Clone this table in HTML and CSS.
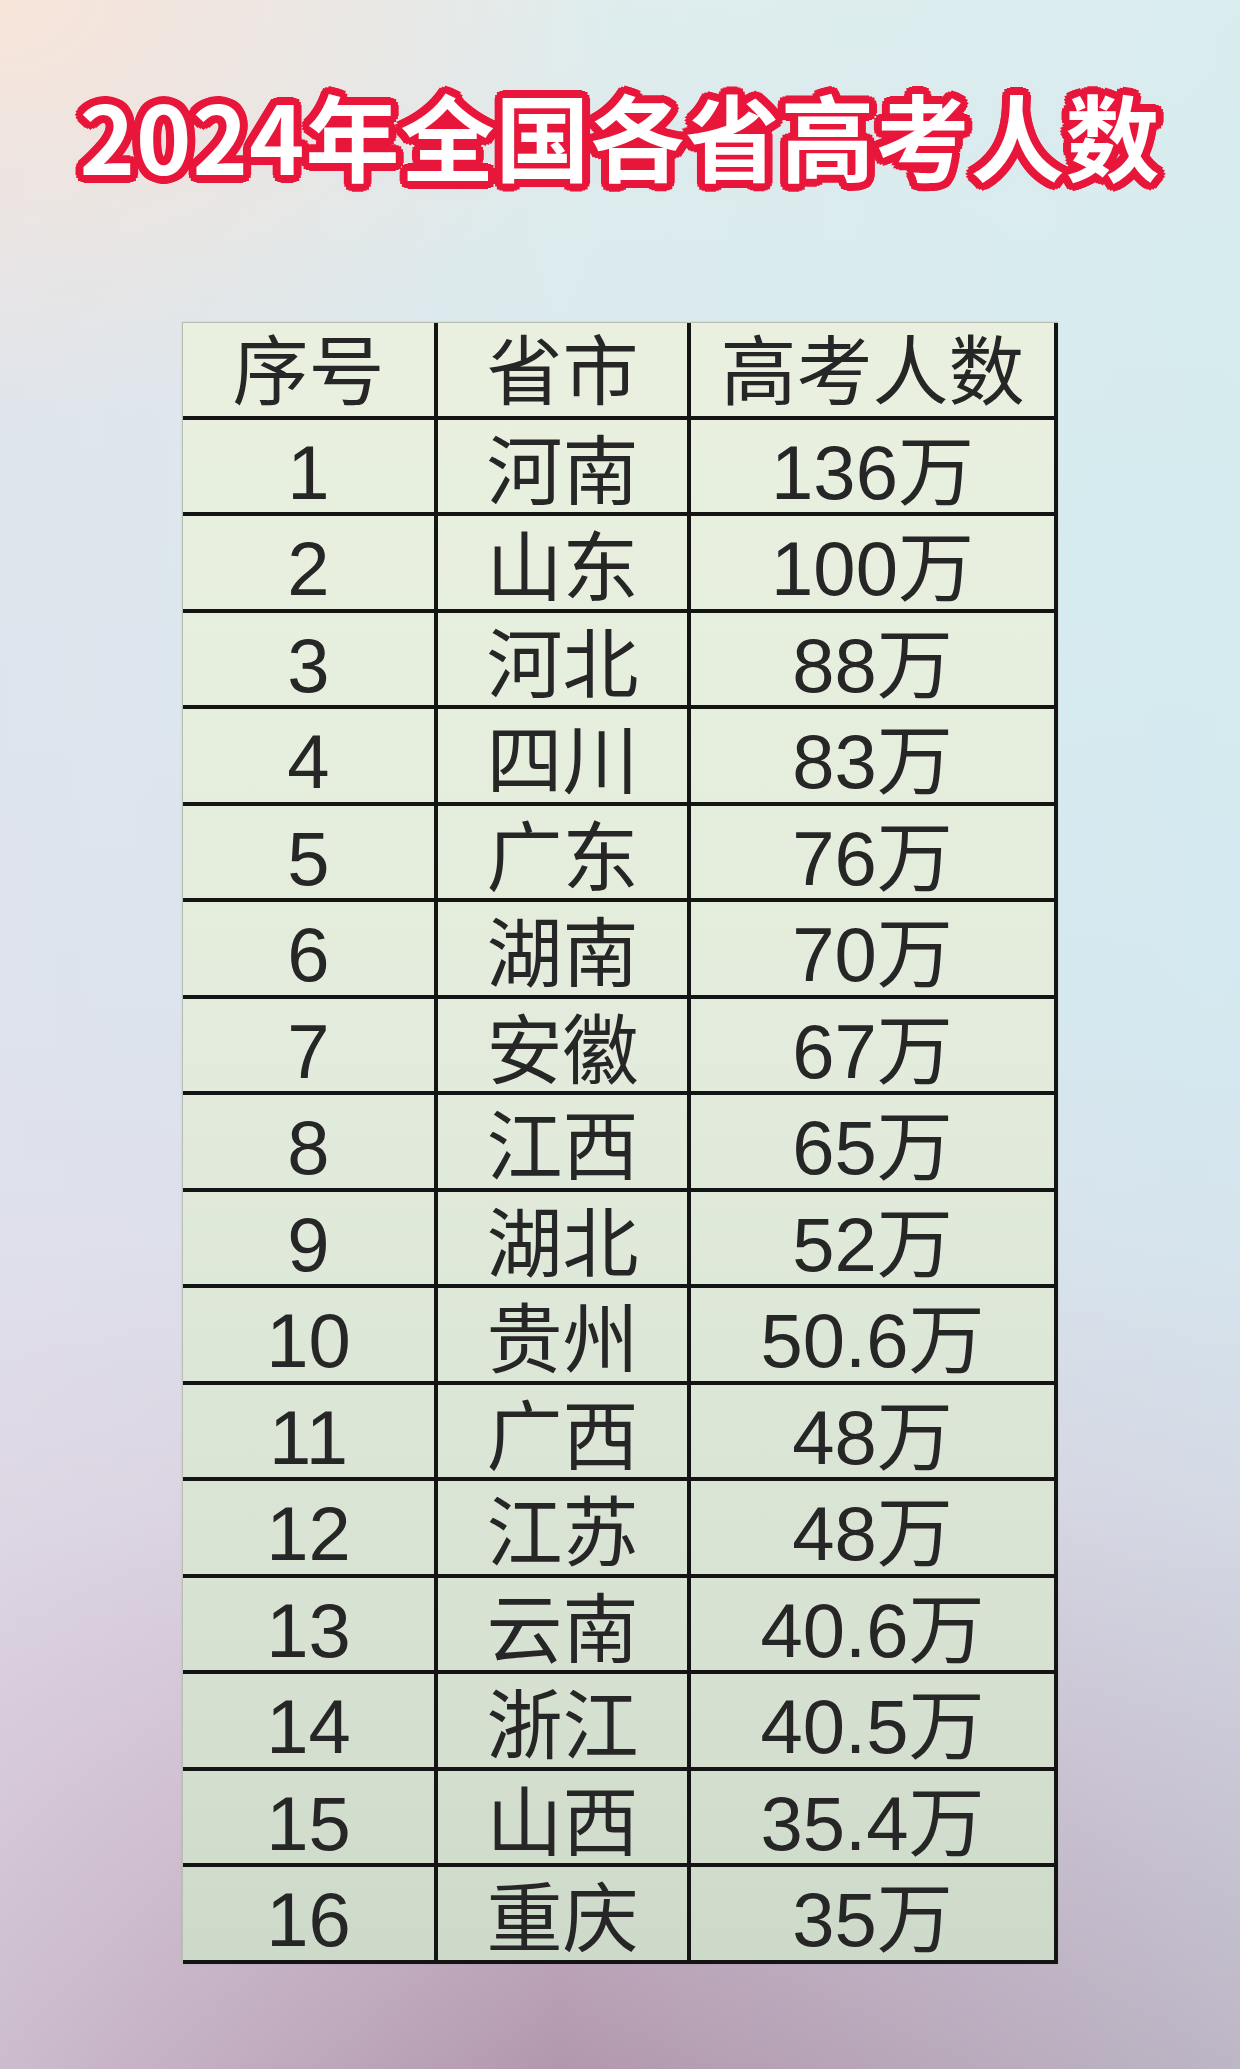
FILE: index.html
```html
<!DOCTYPE html>
<html lang="zh-CN">
<head>
<meta charset="utf-8">
<title>2024年全国各省高考人数</title>
<link rel="stylesheet" href="styles.css">
</head>
<body>
<main class="page">
  <h1 class="title">2024年全国各省高考人数</h1>
  <div class="table">
    <div class="cell head">序号</div><div class="cell head">省市</div><div class="cell head">高考人数</div>
    <div class="cell">1</div><div class="cell">河南</div><div class="cell">136万</div>
    <div class="cell">2</div><div class="cell">山东</div><div class="cell">100万</div>
    <div class="cell">3</div><div class="cell">河北</div><div class="cell">88万</div>
    <div class="cell">4</div><div class="cell">四川</div><div class="cell">83万</div>
    <div class="cell">5</div><div class="cell">广东</div><div class="cell">76万</div>
    <div class="cell">6</div><div class="cell">湖南</div><div class="cell">70万</div>
    <div class="cell">7</div><div class="cell">安徽</div><div class="cell">67万</div>
    <div class="cell">8</div><div class="cell">江西</div><div class="cell">65万</div>
    <div class="cell">9</div><div class="cell">湖北</div><div class="cell">52万</div>
    <div class="cell">10</div><div class="cell">贵州</div><div class="cell">50.6万</div>
    <div class="cell">11</div><div class="cell">广西</div><div class="cell">48万</div>
    <div class="cell">12</div><div class="cell">江苏</div><div class="cell">48万</div>
    <div class="cell">13</div><div class="cell">云南</div><div class="cell">40.6万</div>
    <div class="cell">14</div><div class="cell">浙江</div><div class="cell">40.5万</div>
    <div class="cell">15</div><div class="cell">山西</div><div class="cell">35.4万</div>
    <div class="cell">16</div><div class="cell">重庆</div><div class="cell">35万</div>
  </div>
</main>
</body>
</html>
```

FILE: styles.css
```css
html, body {
  margin: 0;
  padding: 0;
}

body {
  width: 1240px;
  height: 2069px;
  overflow: hidden;
  background:
    radial-gradient(ellipse 620px 420px at 0 0, rgba(248, 228, 216, 0.95) 0%, rgba(248, 228, 216, 0) 100%),
    linear-gradient(90deg, rgba(228, 224, 236, 0.5) 0%, rgba(228, 224, 236, 0) 45%, rgba(206, 238, 242, 0.35) 100%),
    linear-gradient(180deg, #dfeced 0%, #d9eaee 30%, #d8e6ee 48%, #dadfea 60%, #d8d0de 72%, #c9b4c8 85%, #b398ad 100%);
  font-family: "Liberation Sans", "Noto Sans CJK SC", sans-serif;
}

.page {
  display: flex;
  flex-direction: column;
  align-items: center;
  padding-top: 84px;
}

.title {
  margin: 0;
  height: 104px;
  font-family: "Noto Sans CJK SC", sans-serif;
  font-weight: 700;
  font-size: 94px;
  line-height: 100px;
  letter-spacing: 1px;
  color: #ffffff;
  text-shadow:
    8px 0 0 #e8163a, -8px 0 0 #e8163a, 0 8px 0 #e8163a, 0 -8px 0 #e8163a,
    7.4px 3.1px 0 #e8163a, -7.4px 3.1px 0 #e8163a, 7.4px -3.1px 0 #e8163a, -7.4px -3.1px 0 #e8163a,
    3.1px 7.4px 0 #e8163a, -3.1px 7.4px 0 #e8163a, 3.1px -7.4px 0 #e8163a, -3.1px -7.4px 0 #e8163a,
    5.7px 5.7px 0 #e8163a, -5.7px 5.7px 0 #e8163a, 5.7px -5.7px 0 #e8163a, -5.7px -5.7px 0 #e8163a,
    4px 0 0 #e8163a, -4px 0 0 #e8163a, 0 4px 0 #e8163a, 0 -4px 0 #e8163a,
    0 0 14px rgba(255, 220, 225, 0.9);
}

.table {
  margin-top: 134px;
  display: grid;
  grid-template-columns: 255px 253px 367px;
  grid-auto-rows: 96.5px;
  border-left: 1px solid #b9bdb4;
  border-top: 1px solid #b9bdb4;
  background: linear-gradient(180deg, #e9f0df 0%, #e3ecdc 45%, #d7e2d3 80%, #cdd9c9 100%);
  box-shadow: 0 0 2px rgba(120, 130, 120, 0.25);
}

.cell {
  display: flex;
  align-items: center;
  justify-content: center;
  padding-top: 14px;
  box-sizing: border-box;
  border-right: 4px solid #141414;
  border-bottom: 4px solid #141414;
  font-size: 76px;
  font-weight: 400;
  color: #262626;
  line-height: 1;
}

.head {
  padding-top: 8px;
}
```
